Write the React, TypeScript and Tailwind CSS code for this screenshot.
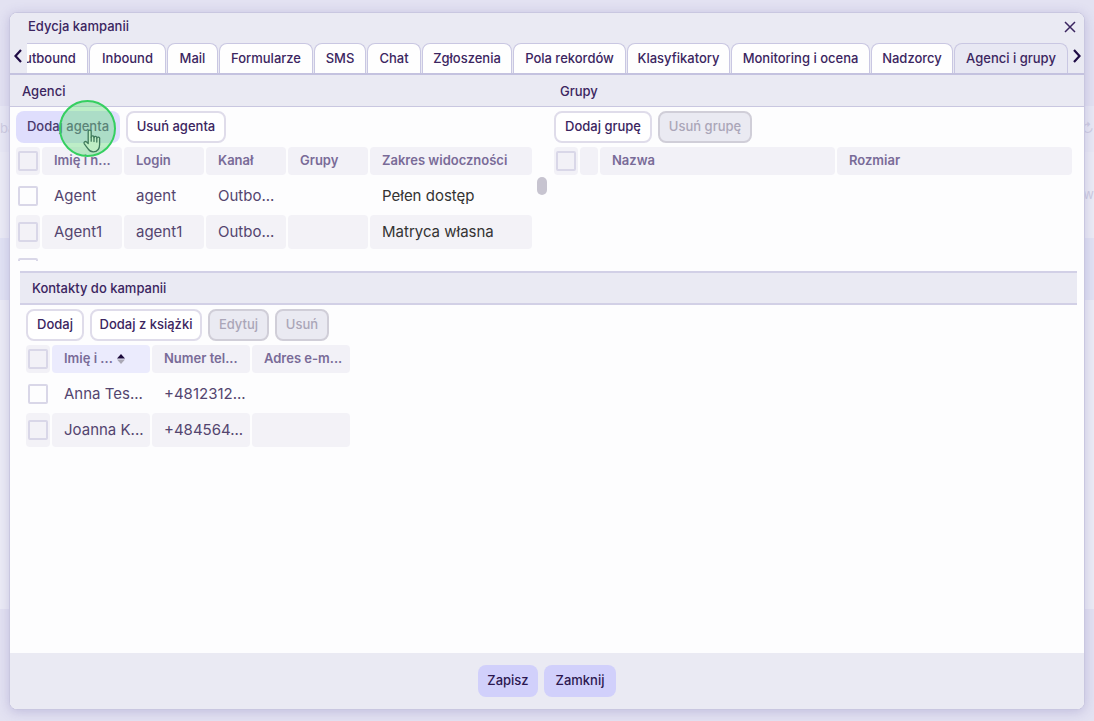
import type { ReactNode } from 'react';
import clsx from 'clsx';

const TABS = [
  { label: 'Outbound', width: 'w-[86px]' },
  { label: 'Inbound', width: 'w-[77px]' },
  { label: 'Mail', width: 'w-[51px]' },
  { label: 'Formularze', width: 'w-[94px]' },
  { label: 'SMS', width: 'w-[52px]' },
  { label: 'Chat', width: 'w-[54px]' },
  { label: 'Zgłoszenia', width: 'w-[90px]' },
  { label: 'Pola rekordów', width: 'w-[113px]' },
  { label: 'Klasyfikatory', width: 'w-[103px]' },
  { label: 'Monitoring i ocena', width: 'w-[139px]' },
  { label: 'Nadzorcy', width: 'w-[82px]' },
  { label: 'Agenci i grupy', width: 'w-[114px]' },
];

const AGENTS = [
  ['Agent', 'agent', 'Outbo...', '', 'Pełen dostęp'],
  ['Agent1', 'agent1', 'Outbo...', '', 'Matryca własna'],
  ['', '', '', '', ''],
];

const CONTACTS = [
  ['Anna Tes...', '+4812312...', ''],
  ['Joanna K...', '+484564...', ''],
];

interface ButtonProps {
  children: ReactNode;
  width: string;
  variant?: 'outline' | 'filled' | 'hover';
  disabled?: boolean;
}

function Button({ children, width, variant = 'outline', disabled }: ButtonProps) {
  return (
    <button
      type="button"
      disabled={disabled}
      className={clsx(
        'h-8 shrink-0 rounded-lg text-[13px] font-medium whitespace-nowrap',
        width,
        disabled && 'border-2 border-[#d0ced8] bg-[#eaeaf2] text-[#aaa6b8]',
        !disabled && variant === 'outline' && 'border-2 border-[#dfdcea] bg-white text-[#3b2560]',
        !disabled && variant === 'filled' && 'bg-[#d1d0fb] text-[#2c1850]',
        !disabled && variant === 'hover' && 'bg-[#dfdefd] text-[#4b3a6e]',
      )}
    >
      {children}
    </button>
  );
}

function Check({ label }: { label: string }) {
  return (
    <input
      type="checkbox"
      aria-label={label}
      className="mx-auto block size-5 appearance-none rounded-xs border-2 border-[#d9d7e8] checked:bg-[#d1d0fb]"
    />
  );
}

interface GridProps {
  label: string;
  widths: string[];
  head: string[];
  rows: string[][];
  sorted?: number;
  darkColumn?: number;
}

function Grid({ label, widths, head, rows, sorted, darkColumn }: GridProps) {
  return (
    <table aria-label={label} className="w-full table-fixed border-separate border-spacing-[2px]">
      <colgroup>
        <col className="w-6" />
        {widths.map((w, i) => (
          <col key={i} className={w} />
        ))}
      </colgroup>
      <thead>
        <tr>
          <th className="p-0 pb-[2px]">
            <div className="flex h-7 items-center rounded-sm bg-[#f2f1f7]">
              <Check label="Zaznacz wszystko" />
            </div>
          </th>
          {head.map((h, i) => (
            <th key={i} className="p-0 pb-[2px] text-left">
              <div
                className={clsx(
                  'flex h-7 items-center rounded-sm text-[13px] font-semibold whitespace-nowrap text-[#796b98]',
                  h && 'pl-3',
                  i === sorted ? 'bg-[#ebebfd]' : 'bg-[#f2f1f7]',
                )}
              >
                {h}
                {i === sorted && (
                  <svg viewBox="0 0 8 10" className="ml-1 h-[10px] w-2" aria-hidden="true">
                    <path d="M4 0 8 4.6H0z" fill="#1d0b3c" />
                    <path d="M0 5.6h8L4 10z" fill="#aaa8b5" />
                  </svg>
                )}
              </div>
            </th>
          ))}
        </tr>
      </thead>
      <tbody>
        {rows.map((row, r) => (
          <tr key={r}>
            <td className={clsx('h-[34px] rounded-sm p-0', r % 2 === 1 && 'bg-[#f3f2f7]')}>
              <Check label={`Zaznacz ${row[0]}`} />
            </td>
            {row.map((cell, i) => (
              <td
                key={i}
                className={clsx(
                  'rounded-sm p-0 pl-3 text-[15px] whitespace-nowrap',
                  r % 2 === 1 && 'bg-[#f3f2f7]',
                  i === darkColumn ? 'text-[#333333]' : 'text-[#54456f]',
                )}
              >
                {cell}
              </td>
            ))}
          </tr>
        ))}
      </tbody>
    </table>
  );
}

function Arrow({ label, d }: { label: string; d: string }) {
  return (
    <button type="button" aria-label={label} className="flex w-4 shrink-0 items-center justify-center pb-1">
      <svg viewBox="0 0 8 14" className="h-[14px] w-2" fill="none" stroke="#1f0b45" strokeWidth="2.2">
        <path d={d} />
      </svg>
    </button>
  );
}

// Page that shows through around the dialog
function Backdrop() {
  return (
    <div
      aria-hidden="true"
      className="absolute inset-0 flex flex-col overflow-hidden pt-[106px] text-[13px] text-[#cfcde2]"
    >
      <div className="flex h-[46px] items-center justify-between bg-[#e9e9f5]">
        <span>ba</span>
        <span>↻</span>
      </div>
      <div className="flex h-[86px] items-center justify-end bg-[#ececf6]">w</div>
      <div className="h-[62px] bg-[#e2e3f4]" />
      <div className="h-[309px] bg-[#ececf6]" />
    </div>
  );
}

export default function App() {
  return (
    <div className="relative flex min-h-screen bg-[#e3e2f2] px-[9px] pt-3 pb-[11px] font-['Inter',sans-serif] text-[#3b2560]">
      <Backdrop />
      <div
        role="dialog"
        aria-label="Edycja kampanii"
        className="relative flex min-w-0 flex-1 flex-col overflow-hidden rounded-lg border border-[#c9c7e0] bg-[#fdfdfe] shadow-[0_2px_12px_rgba(90,80,160,0.25)]"
      >
        <header className="bg-[#eaeaf3]">
          <div className="flex h-[30px] items-center justify-between pr-2 pb-[2px] pl-[18px]">
            <h1 className="text-[13px] font-medium">Edycja kampanii</h1>
            <button type="button" aria-label="Zamknij okno" className="p-0">
              <svg viewBox="0 0 12 12" className="size-3" fill="none" stroke="#3b2560" strokeWidth="1.5">
                <path d="M1 1l10 10M11 1 1 11" />
              </svg>
            </button>
          </div>
          <div className="flex h-8 gap-px border-b-2 border-[#c4c2df]">
            <Arrow label="Poprzednie zakładki" d="M7 1 1.5 7 7 13" />
            <div role="tablist" className="flex min-w-0 flex-1 justify-end gap-px overflow-hidden">
              {TABS.map((t, i) => {
                const active = i === TABS.length - 1;
                return (
                  <button
                    key={t.label}
                    type="button"
                    role="tab"
                    aria-selected={active}
                    className={clsx(
                      'h-[30px] shrink-0 rounded-t-lg border border-b-0 border-[#c9c7e2] text-[13px] font-medium whitespace-nowrap',
                      t.width,
                      active ? 'bg-[#e8e8f3]' : 'bg-[#fefefe]',
                    )}
                  >
                    {t.label}
                  </button>
                );
              })}
            </div>
            <div className="-mr-px flex">
              <Arrow label="Następne zakładki" d="M1 1 6.5 7 1 13" />
            </div>
          </div>
        </header>

        <main className="flex-1">
          <div className="grid grid-cols-2">
            <section>
              <h2 className="h-8 border-b border-[#c9c7e0] bg-[#eaeaf3] pl-3 text-[13px] leading-8 font-medium">
                Agenci
              </h2>
              <div className="flex gap-[6px] pt-1 pl-[6px]">
                <Button variant="hover" width="w-[104px]">Dodaj agenta</Button>
                <Button width="w-[100px]">Usuń agenta</Button>
              </div>
              <div className="mt-[2px] flex h-[116px] gap-[3px] overflow-hidden pl-1">
                <div className="min-w-0 flex-1">
                  <Grid
                    label="Agenci"
                    widths={['w-20', 'w-20', 'w-20', 'w-20', 'w-auto']}
                    head={['Imię i n...', 'Login', 'Kanał', 'Grupy', 'Zakres widoczności']}
                    rows={AGENTS}
                    darkColumn={4}
                  />
                </div>
                <div className="w-[10px] pt-8">
                  <div className="h-[18px] rounded-full bg-[#c7c4d0]" />
                </div>
              </div>
            </section>
            <section>
              <h2 className="h-8 border-b border-[#c9c7e0] bg-[#eaeaf3] pl-[13px] text-[13px] leading-8 font-medium">
                Grupy
              </h2>
              <div className="flex gap-[6px] pt-1 pl-[7px]">
                <Button width="w-[98px]">Dodaj grupę</Button>
                <Button width="w-[94px]" disabled>Usuń grupę</Button>
              </div>
              <div className="mt-[2px] pr-[10px] pl-[5px]">
                <Grid label="Grupy" widths={['w-[18px]', 'w-auto', 'w-auto']} head={['', 'Nazwa', 'Rozmiar']} rows={[]} />
              </div>
            </section>
          </div>

          <section className="mt-[10px] mr-[7px] ml-[10px]">
            <h2 className="h-[34px] border-y-2 border-[#d2d0e6] bg-[#eaeaf3] pl-3 text-[13px] leading-[30px] font-medium">
              Kontakty do kampanii
            </h2>
            <div className="flex gap-[6px] pt-1 pl-[6px]">
              <Button width="w-[58px]">Dodaj</Button>
              <Button width="w-[112px]">Dodaj z książki</Button>
              <Button width="w-[61px]" disabled>Edytuj</Button>
              <Button width="w-[54px]" disabled>Usuń</Button>
            </div>
            <div className="mt-[2px] ml-1 w-[328px]">
              <Grid
                label="Kontakty do kampanii"
                widths={['w-auto', 'w-auto', 'w-auto']}
                head={['Imię i ...', 'Numer tel...', 'Adres e-m...']}
                rows={CONTACTS}
                sorted={0}
              />
            </div>
          </section>
        </main>

        <footer className="flex h-14 items-center justify-center gap-[6px] bg-[#eaeaf3]">
          <Button variant="filled" width="w-[60px]">Zapisz</Button>
          <Button variant="filled" width="w-[72px]">Zamknij</Button>
        </footer>
      </div>

      {/* click highlight */}
      <div className="pointer-events-none absolute top-[100px] left-[59px] flex size-[57px] justify-center rounded-full border-2 border-[#35cf60] bg-[#6fdc85]/45 pt-[27px] pl-2">
        <svg
          viewBox="0 0 18 24"
          className="h-6 w-[18px]"
          fill="#bfeec4"
          stroke="#3f7a5c"
          strokeWidth="1.3"
          strokeLinecap="round"
          strokeLinejoin="round"
        >
          <path d="M5.2 14.5V2.6a1.5 1.5 0 0 1 3 0v5.6a1.4 1.4 0 0 1 2.8.3 1.4 1.4 0 0 1 2.8.6 1.4 1.4 0 0 1 2.8.8v5.6c0 4.5-2.4 7.3-6.3 7.3-2.8 0-4.2-1.2-5.4-3.2L1.3 14.8c-.9-1.7 1.1-3 2.3-1.7z" />
          <path d="M8.2 8.2v4M11 8.5v4M13.8 9.1v4" fill="none" />
        </svg>
      </div>
    </div>
  );
}
